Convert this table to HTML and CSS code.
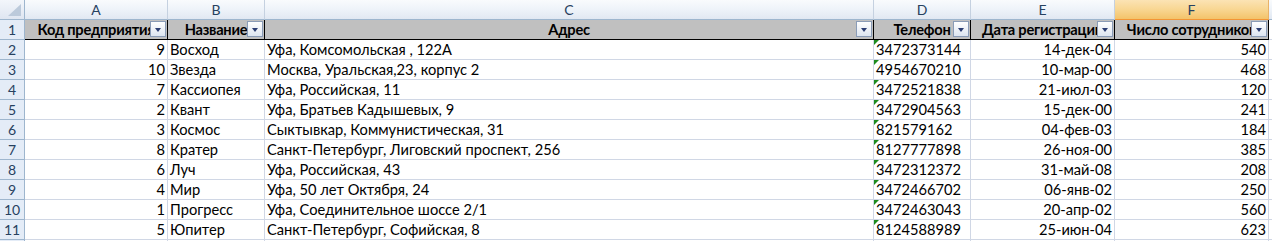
FILE: index.html
```html
<!DOCTYPE html>
<html lang="ru">
<head>
<meta charset="utf-8">
<title>Лист Excel</title>
<link rel="stylesheet" href="styles.css">
</head>
<body>
<div class="sheet">
  <div class="corner"><span class="corner-tri"></span></div>
  <div class="ch">A</div>
  <div class="ch">B</div>
  <div class="ch">C</div>
  <div class="ch">D</div>
  <div class="ch">E</div>
  <div class="ch sel">F</div>
  <div class="ch last"></div>

  <div class="rh">1</div>
  <div class="c hd">Код предприятия<span class="dd"></span></div>
  <div class="c hd">Название<span class="dd"></span></div>
  <div class="c hd">Адрес<span class="dd"></span></div>
  <div class="c hd">Телефон<span class="dd"></span></div>
  <div class="c hd">Дата регистрации<span class="dd"></span></div>
  <div class="c hd">Число сотрудников<span class="dd"></span></div>
  <div class="c"></div>

  <div class="rh">2</div><div class="c r">9</div><div class="c">Восход</div><div class="c">Уфа, Комсомольская , 122А</div><div class="c tx">3472373144</div><div class="c r">14-дек-04</div><div class="c r">540</div><div class="c"></div>
  <div class="rh">3</div><div class="c r">10</div><div class="c">Звезда</div><div class="c">Москва, Уральская,23, корпус 2</div><div class="c tx">4954670210</div><div class="c r">10-мар-00</div><div class="c r">468</div><div class="c"></div>
  <div class="rh">4</div><div class="c r">7</div><div class="c">Кассиопея</div><div class="c">Уфа, Российская, 11</div><div class="c tx">3472521838</div><div class="c r">21-июл-03</div><div class="c r">120</div><div class="c"></div>
  <div class="rh">5</div><div class="c r">2</div><div class="c">Квант</div><div class="c">Уфа, Братьев Кадышевых, 9</div><div class="c tx">3472904563</div><div class="c r">15-дек-00</div><div class="c r">241</div><div class="c"></div>
  <div class="rh">6</div><div class="c r">3</div><div class="c">Космос</div><div class="c">Сыктывкар, Коммунистическая, 31</div><div class="c tx">821579162</div><div class="c r">04-фев-03</div><div class="c r">184</div><div class="c"></div>
  <div class="rh">7</div><div class="c r">8</div><div class="c">Кратер</div><div class="c">Санкт-Петербург, Лиговский проспект, 256</div><div class="c tx">8127777898</div><div class="c r">26-ноя-00</div><div class="c r">385</div><div class="c"></div>
  <div class="rh">8</div><div class="c r">6</div><div class="c">Луч</div><div class="c">Уфа, Российская, 43</div><div class="c tx">3472312372</div><div class="c r">31-май-08</div><div class="c r">208</div><div class="c"></div>
  <div class="rh">9</div><div class="c r">4</div><div class="c">Мир</div><div class="c">Уфа, 50 лет Октября, 24</div><div class="c tx">3472466702</div><div class="c r">06-янв-02</div><div class="c r">250</div><div class="c"></div>
  <div class="rh">10</div><div class="c r">1</div><div class="c">Прогресс</div><div class="c">Уфа, Соединительное шоссе 2/1</div><div class="c tx">3472463043</div><div class="c r">20-апр-02</div><div class="c r">560</div><div class="c"></div>
  <div class="rh">11</div><div class="c r">5</div><div class="c">Юпитер</div><div class="c">Санкт-Петербург, Софийская, 8</div><div class="c tx">8124588989</div><div class="c r">25-июн-04</div><div class="c r">623</div><div class="c"></div>
  <div class="rh"></div><div class="c"></div><div class="c"></div><div class="c"></div><div class="c"></div><div class="c"></div><div class="c"></div><div class="c"></div>
</div>
</body>
</html>
```
FILE: styles.css
```css
html, body {
  margin: 0;
  padding: 0;
  background: #ffffff;
  overflow: hidden;
}

.sheet {
  display: grid;
  grid-template-columns: 25px 143px 97px 609px 97px 144px 154px 1fr;
  grid-auto-rows: 20px;
  width: 1272px;
  height: 241px;
  overflow: hidden;
  font-family: Lato, "Liberation Sans", sans-serif;
  font-size: 14.67px;
  color: #000;
}

.sheet > div {
  box-sizing: border-box;
  white-space: nowrap;
  overflow: hidden;
  position: relative;
}

.corner {
  background: linear-gradient(#f3f6fb, #dfe6f1);
  border-right: 1px solid #9eb6ce;
  border-bottom: 1px solid #9eb6ce;
}

.corner-tri {
  position: absolute;
  right: 3px;
  bottom: 3px;
  width: 0;
  height: 0;
  border-left: 13px solid transparent;
  border-bottom: 12px solid #bccadb;
}

.ch {
  background: linear-gradient(#f9fbfd 0%, #eef3f9 50%, #e1e8f2 100%);
  border-right: 1px solid #c5d1e0;
  border-bottom: 1px solid #9eb6ce;
  text-align: center;
  font-size: 14px;
  line-height: 19px;
  color: #27415f;
}

.ch.sel {
  background: linear-gradient(#fbe3b4 0%, #f8d692 50%, #f3c36a 100%);
  border-bottom: 1px solid #f29536;
  border-right: 1px solid #e9b268;
}

.ch.last {
  border-right: none;
}

.rh {
  background: #e4ecf7;
  border-right: 1px solid #9eb6ce;
  border-bottom: 1px solid #9eb6ce;
  text-align: center;
  font-size: 14px;
  line-height: 20px;
  color: #27415f;
}

.c {
  border-right: 1px solid #d0d7e5;
  border-bottom: 1px solid #d0d7e5;
  padding: 0 2px;
  line-height: 20px;
}

.c.r {
  text-align: right;
}

.c.hd {
  background: #c0c0c0;
  border-right: 1px solid #000;
  border-bottom: 1px solid #000;
  font-weight: bold;
  letter-spacing: -0.25px;
  text-align: center;
  padding: 0;
  text-overflow: clip;
}

.c.tx::before {
  content: "";
  position: absolute;
  left: 0;
  top: 0;
  width: 0;
  height: 0;
  border-top: 5px solid #1e8c1e;
  border-right: 5px solid transparent;
}

.dd {
  position: absolute;
  right: 1px;
  top: 1px;
  width: 16px;
  height: 16px;
  box-sizing: border-box;
  border: 1px solid #8a9cb7;
  background: linear-gradient(#ffffff, #dde5f0);
}

.dd::after {
  content: "";
  position: absolute;
  left: 4px;
  top: 6px;
  width: 0;
  height: 0;
  border-left: 3.5px solid transparent;
  border-right: 3.5px solid transparent;
  border-top: 4px solid #2b3e73;
}
```
